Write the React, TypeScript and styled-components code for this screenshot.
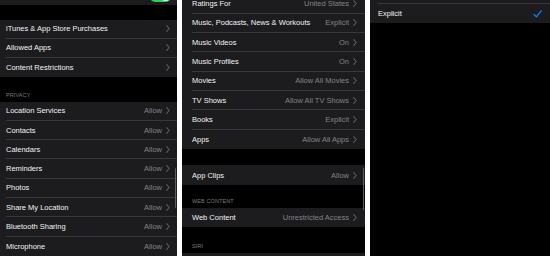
import React from 'react';
import styled, { createGlobalStyle } from 'styled-components';

const GlobalStyle = createGlobalStyle`
  html, body {
    margin: 0;
    padding: 0;
    background: #ffffff;
  }
  body {
    font-family: 'Liberation Sans', Arial, sans-serif;
    -webkit-font-smoothing: antialiased;
  }
`;

const ROW_H = 19.3;

const Screens = styled.div`
  display: flex;
  gap: 5px;
  width: 550px;
  height: 256px;
  overflow: hidden;
`;

const Panel = styled.div<{ $width: number }>`
  position: relative;
  flex: 0 0 ${({ $width }) => $width}px;
  height: 256px;
  overflow: hidden;
  background: #000000;
`;

const ScrollContent = styled.div<{ $offset: number }>`
  display: flex;
  flex-direction: column;
  margin-top: ${({ $offset }) => $offset}px;
`;

const Group = styled.div`
  display: flex;
  flex-direction: column;
  background: #1c1c1e;
`;

const Row = styled.div<{ $inset: number; $pad: number }>`
  display: flex;
  height: ${ROW_H}px;
  padding-left: ${({ $inset }) => $inset}px;
  box-sizing: border-box;

  & > div {
    padding-right: ${({ $pad }) => $pad}px;
  }

  &:not(:last-child) > div {
    border-bottom: 0.6px solid #38383a;
  }
`;

const RowInner = styled.div`
  flex: 1;
  display: flex;
  align-items: center;
  gap: 4px;
  min-width: 0;
  box-sizing: border-box;
`;

const Label = styled.span`
  flex: 1;
  color: #f2f2f4;
  font-size: 7.5px;
  white-space: nowrap;
`;

const Value = styled.span`
  color: #828287;
  font-size: 7.5px;
  white-space: nowrap;
`;

const Gap = styled.div<{ $h: number }>`
  height: ${({ $h }) => $h}px;
  flex: 0 0 auto;
`;

const SectionHeader = styled.div<{ $h: number; $inset: number }>`
  height: ${({ $h }) => $h}px;
  display: flex;
  align-items: flex-end;
  padding: 0 0 4px ${({ $inset }) => $inset}px;
  box-sizing: border-box;
  color: #7a7a7f;
  font-size: 5.5px;
  letter-spacing: 0.1px;
  text-transform: uppercase;
`;

const Toggle = styled.div`
  position: relative;
  width: 23px;
  height: 13.5px;
  border-radius: 7px;
  background: #30d158;

  &::after {
    content: '';
    position: absolute;
    right: 1px;
    top: 1px;
    width: 11.5px;
    height: 11.5px;
    border-radius: 50%;
    background: #ffffff;
  }
`;

const ScrollIndicator = styled.div<{ $top: number; $h: number }>`
  position: absolute;
  right: 1px;
  top: ${({ $top }) => $top}px;
  width: 1.5px;
  height: ${({ $h }) => $h}px;
  border-radius: 1px;
  background: #5e5e62;
`;

const Chevron = () => (
  <svg width="4" height="7" viewBox="0 0 4 7" fill="none">
    <path d="M0.7 0.7 L3.2 3.5 L0.7 6.3" stroke="#5c5c61" strokeWidth="1.1" strokeLinecap="round" strokeLinejoin="round" />
  </svg>
);

const Check = () => (
  <svg width="9" height="8" viewBox="0 0 9 8" fill="none">
    <path d="M1 4.4 L3.4 6.9 L8.2 0.8" stroke="#0a84ff" strokeWidth="1.3" strokeLinecap="round" strokeLinejoin="round" />
  </svg>
);

type Item = { label?: string; value?: string };

type ListRowProps = Item & { inset: number; pad: number; chevron?: boolean; children?: React.ReactNode };

const ListRow = ({ label, value, inset, pad, chevron = true, children }: ListRowProps) => (
  <Row $inset={inset} $pad={pad}>
    <RowInner>
      <Label>{label}</Label>
      {value && <Value>{value}</Value>}
      {children}
      {chevron && <Chevron />}
    </RowInner>
  </Row>
);

const restrictions: Item[] = [
  { label: 'iTunes & App Store Purchases' },
  { label: 'Allowed Apps' },
  { label: 'Content Restrictions' },
];

const privacy: Item[] = [
  'Location Services',
  'Contacts',
  'Calendars',
  'Reminders',
  'Photos',
  'Share My Location',
  'Bluetooth Sharing',
  'Microphone',
].map(label => ({ label, value: 'Allow' }));

const ratings: Item[] = [
  { label: 'Ratings For', value: 'United States' },
  { label: 'Music, Podcasts, News & Workouts', value: 'Explicit' },
  { label: 'Music Videos', value: 'On' },
  { label: 'Music Profiles', value: 'On' },
  { label: 'Movies', value: 'Allow All Movies' },
  { label: 'TV Shows', value: 'Allow All TV Shows' },
  { label: 'Books', value: 'Explicit' },
  { label: 'Apps', value: 'Allow All Apps' },
];

const App = () => (
  <>
    <GlobalStyle />
    <Screens>
      <Panel $width={177}>
        <ScrollContent $offset={-14.4}>
          <Group>
            <ListRow inset={6} pad={5} chevron={false}>
              <Toggle />
            </ListRow>
          </Group>
          <Gap $h={14.6} />
          <Group>
            {restrictions.map(item => (
              <ListRow key={item.label} {...item} inset={6} pad={7} />
            ))}
          </Group>
          <SectionHeader $h={24.2} $inset={6}>Privacy</SectionHeader>
          <Group>
            {privacy.map(item => (
              <ListRow key={item.label} {...item} inset={6} pad={7} />
            ))}
          </Group>
        </ScrollContent>
        <ScrollIndicator $top={168} $h={40} />
      </Panel>

      <Panel $width={183}>
        <ScrollContent $offset={-5.5}>
          <Group>
            {ratings.map(item => (
              <ListRow key={item.label} {...item} inset={10} pad={8} />
            ))}
          </Group>
          <Gap $h={16.6} />
          <Group>
            <ListRow label="App Clips" value="Allow" inset={10} pad={8} />
          </Group>
          <SectionHeader $h={23.2} $inset={10}>Web Content</SectionHeader>
          <Group>
            <ListRow label="Web Content" value="Unrestricted Access" inset={10} pad={8} />
          </Group>
          <SectionHeader $h={25.7} $inset={10}>Siri</SectionHeader>
          <Group>
            <ListRow inset={10} pad={8} chevron={false} />
          </Group>
        </ScrollContent>
        <ScrollIndicator $top={168} $h={42} />
      </Panel>

      <Panel $width={180}>
        <ScrollContent $offset={-15.3}>
          <Group>
            <ListRow inset={8} pad={8} chevron={false} />
            <ListRow label="Explicit" inset={8} pad={8} chevron={false}>
              <Check />
            </ListRow>
          </Group>
        </ScrollContent>
      </Panel>
    </Screens>
  </>
);

export default App;
